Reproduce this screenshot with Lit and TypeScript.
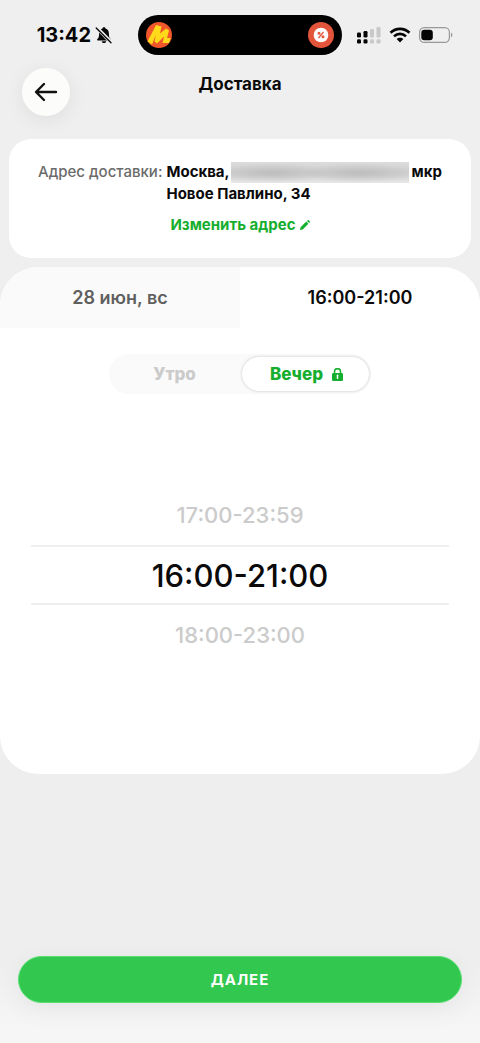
import { LitElement, html, css } from "lit";
import { customElement, property, state } from "lit/decorators.js";
import { classMap } from "lit/directives/class-map.js";

@customElement("status-bar")
class StatusBar extends LitElement {
  @property() time = "";

  static styles = css`
    :host {
      display: grid;
      grid-template-columns: 1fr 204px 1fr;
      height: 40px;
      padding-top: 15px;
      color: #050505;
    }
    .left,
    .right {
      display: flex;
      align-items: center;
    }
    .left {
      justify-content: flex-end;
      gap: 4px;
      padding-right: 25px;
      font-size: 20px;
      line-height: 24px;
      font-weight: 700;
    }
    .right {
      gap: 8px;
      padding-left: 15px;
    }
    .island {
      display: flex;
      align-items: center;
      justify-content: space-between;
      padding: 0 8px;
      border-radius: 20px;
      background: #000;
    }
    svg {
      display: block;
      flex: none;
    }
  `;

  render() {
    return html`
      <div class="left">
        <span>${this.time}</span>
        <svg width="18" height="18" viewBox="0 0 18 18" aria-hidden="true">
          <path
            d="M9 1.2c.8 0 1.4.5 1.5 1.2 2.2.7 3.4 2.6 3.4 5 0 3.6.6 4.6 1.7 5.7.6.6.3 1.3-.5 1.3H2.9c-.8 0-1.100-.7-.5-1.300 1.100-1.100 1.700-2.100 1.700-5.700 0-2.400 1.200-4.300 3.400-5C7.600 1.700 8.200 1.200 9 1.200z"
            fill="#050505"
          />
          <path d="M6.700 15.200h4.600c-.3 1.200-1.200 1.900-2.300 1.900s-2-.7-2.300-1.900z" fill="#050505" />
          <path d="M1.500 1.600 16.400 16.600" stroke="#efefef" stroke-width="3.600" />
          <path d="M1.200 2 16 16.700" stroke="#050505" stroke-width="1.300" stroke-linecap="round" />
        </svg>
      </div>
      <div class="island">
        <svg width="26" height="26" viewBox="0 0 26 26" aria-hidden="true">
          <circle cx="13" cy="13" r="13" fill="#f0562a" />
          <path
            d="M1.500 19.500 10 3 15.500 4.500 14 11.500 20 6.500 23 8.500 21 16 24.800 16 23 21 16.500 21 18 14.500 11 21.500 8.500 19.500 9.800 13 6 22.500z"
            fill="#ffd91a"
          />
        </svg>
        <svg width="26" height="26" viewBox="0 0 26 26" aria-hidden="true">
          <circle cx="13" cy="13" r="13" fill="#e2553b" />
          <circle cx="13" cy="13" r="7.300" fill="#fff" />
          <g fill="none" stroke="#e2553b" stroke-width="1.300">
            <path d="M15.500 10 10.500 16" />
            <circle cx="11" cy="11.200" r=".9" />
            <circle cx="15" cy="14.800" r=".9" />
          </g>
        </svg>
      </div>
      <div class="right">
        <svg width="24" height="17" viewBox="0 0 24 17" aria-hidden="true">
          <g fill="#050505">
            <rect x="0" y="5.500" width="4" height="5" rx="1.300" />
            <rect x="6.500" y="4" width="4" height="6.500" rx="1.300" />
            <rect x="0" y="12.300" width="4" height="4.300" rx="1.300" />
            <rect x="6.500" y="12.300" width="4" height="4.300" rx="1.300" />
          </g>
          <g fill="#c8c8c8">
            <rect x="13" y="2" width="4" height="8.500" rx="1.300" />
            <rect x="19.500" y="0" width="4" height="10.500" rx="1.300" />
            <rect x="13" y="12.300" width="4" height="4.300" rx="1.300" />
            <rect x="19.500" y="12.300" width="4" height="4.300" rx="1.300" />
          </g>
        </svg>
        <svg width="22" height="16" viewBox="0 0 22 16" aria-hidden="true">
          <g fill="none" stroke="#050505" stroke-width="2.700">
            <path d="M1.500 5.700C6.800.5 15.200.5 20.500 5.700" />
            <path d="M5 9.400c3.400-3.300 8.600-3.300 12 0" />
          </g>
          <path d="M7.600 12c1.900-1.800 4.900-1.800 6.800 0L11 15.400z" fill="#050505" />
        </svg>
        <svg width="34" height="16" viewBox="0 0 34 16" aria-hidden="true">
          <rect x=".6" y=".6" width="29.800" height="14.800" rx="4.600" fill="none" stroke="#999" stroke-width="1.200" />
          <rect x="2.300" y="2.700" width="11.500" height="10.600" rx="3" fill="#050505" />
          <path d="M32 5.500c1.800.7 1.800 4.300 0 5z" fill="#999" />
        </svg>
      </div>
    `;
  }
}

@customElement("address-card")
class AddressCard extends LitElement {
  static styles = css`
    :host {
      display: block;
      margin: 0 9px;
      padding: 22px 24px;
      border-radius: 22px;
      background: #fff;
      font-size: 15px;
      line-height: 22px;
    }
    .row {
      display: flex;
      justify-content: center;
      gap: 4px;
      margin: 0;
    }
    .label {
      color: #6b6b6b;
      font-weight: 500;
      white-space: nowrap;
    }
    .value {
      margin: 0;
      color: #0a0a0a;
      font-weight: 700;
    }
    .line {
      display: flex;
      align-items: center;
    }
    .hidden {
      width: 178px;
      height: 21px;
      margin: 0 3px 0 1px;
      background:
        radial-gradient(ellipse 56px 10px at 42px 11px, rgba(160, 160, 160, 0.4), transparent),
        radial-gradient(ellipse 56px 10px at 128px 11px, rgba(160, 160, 160, 0.4), transparent),
        linear-gradient(#dcdcdc, #d0d0d0 45%, #d3d3d3 65%, #e8e8e8);
    }
    .edit {
      display: flex;
      justify-content: center;
      margin-top: 9px;
    }
    a {
      display: flex;
      align-items: center;
      gap: 4px;
      color: #16ae2e;
      font-weight: 700;
      text-decoration: none;
    }
  `;

  render() {
    return html`
      <dl class="row">
        <dt class="label">Адрес доставки:</dt>
        <dd class="value">
          <div class="line"><span>Москва,</span><span class="hidden"></span><span>мкр</span></div>
          <div class="line">Новое Павлино, 34</div>
        </dd>
      </dl>
      <div class="edit">
        <a href="#address">
          Изменить адрес
          <svg width="10" height="10" viewBox="0 0 10 10" aria-hidden="true">
            <path
              d="M0 10 .6 7.300 6.300 1.600 8.400 3.700 2.700 9.400zM7 .9 7.700.2c.3-.3.700-.3 1 0L9.800 1.300c.3.300.3.700 0 1L9.100 3z"
              fill="#16ae2e"
            />
          </svg>
        </a>
      </div>
    `;
  }
}

@customElement("slot-picker")
class SlotPicker extends LitElement {
  @state() tab = 1;
  @state() period = 1;
  @state() slotIndex = 1;

  private tabs = ["28 июн, вс", "16:00-21:00"];
  private slots = ["17:00-23:59", "16:00-21:00", "18:00-23:00"];

  static styles = css`
    :host {
      display: block;
      overflow: hidden;
      padding-bottom: 109px;
      border-radius: 38px;
      background: #fff;
    }
    button {
      margin: 0;
      padding: 0;
      border: 0;
      background: none;
      font-family: inherit;
      cursor: pointer;
    }
    .tabs {
      display: grid;
      grid-template-columns: 1fr 1fr;
    }
    .tab {
      height: 61px;
      background: #fafafa;
      color: #5f5f5f;
      font-size: 18px;
      font-weight: 600;
    }
    .tab.active {
      background: #fff;
      color: #0a0a0a;
    }
    .periods {
      display: grid;
      grid-template-columns: 1fr 1fr;
      width: 262px;
      height: 40px;
      margin: 26px auto 91px;
      border-radius: 20px;
      background: #fafafa;
    }
    .period {
      display: flex;
      align-items: center;
      justify-content: center;
      gap: 9px;
      margin: 3px 2px;
      border-radius: 18px;
      color: #cbcbcb;
      font-size: 17px;
      font-weight: 800;
    }
    .period.active {
      padding-left: 2px;
      background: #fff;
      box-shadow: 0 0 3px rgba(0, 0, 0, 0.22);
      color: #16ae2e;
    }
    .slots {
      display: grid;
      margin: 0 31px;
    }
    .slot {
      height: 60px;
      color: #cbcbcb;
      font-size: 22px;
      font-weight: 500;
    }
    .slot.active {
      border-top: 2px solid #efefef;
      border-bottom: 2px solid #efefef;
      color: #0a0a0a;
      font-size: 31px;
    }
  `;

  render() {
    return html`
      <div class="tabs">
        ${this.tabs.map(
          (label, i) => html`<button
            class=${classMap({ tab: true, active: i === this.tab })}
            @click=${() => (this.tab = i)}
          >
            ${label}
          </button>`
        )}
      </div>
      <div class="periods">
        ${["Утро", "Вечер"].map(
          (label, i) => html`<button
            class=${classMap({ period: true, active: i === this.period })}
            @click=${() => (this.period = i)}
          >
            ${label}${i === this.period
              ? html`<svg width="11" height="13" viewBox="0 0 11 13" aria-hidden="true">
                  <path d="M2.500 6V3.700a3 3 0 0 1 6 0V6" fill="none" stroke="#16ae2e" stroke-width="1.500" />
                  <rect y="5" width="11" height="8" rx="1.200" fill="#16ae2e" />
                  <path d="M5.500 7.300v3" stroke="#fff" stroke-width="1.500" stroke-linecap="round" />
                </svg>`
              : ""}
          </button>`
        )}
      </div>
      <div class="slots">
        ${this.slots.map(
          (label, i) => html`<button
            class=${classMap({ slot: true, active: i === this.slotIndex })}
            @click=${() => (this.slotIndex = i)}
          >
            ${label}
          </button>`
        )}
      </div>
    `;
  }
}

@customElement("app-root")
class AppRoot extends LitElement {
  static styles = css`
    :host {
      display: flex;
      flex-direction: column;
      box-sizing: border-box;
      min-height: 100vh;
      background: linear-gradient(#efefef 0, #eeeeee 92%, #f6f6f6 99%);
      font-family: Inter, "Liberation Sans", sans-serif;
      color: #0a0a0a;
    }
    header {
      display: grid;
      grid-template-columns: 48px 1fr 48px;
      align-items: start;
      padding: 13px 22px 23px;
    }
    .back {
      display: grid;
      place-items: center;
      width: 48px;
      height: 48px;
      padding: 0;
      border: 0;
      border-radius: 50%;
      background: #fcfcfa;
      box-shadow: 0 4px 20px rgba(0, 0, 0, 0.07);
    }
    h1 {
      margin: 0;
      font-size: 17px;
      line-height: 32px;
      font-weight: 700;
      text-align: center;
    }
    slot-picker {
      margin-top: 9px;
    }
    footer {
      display: grid;
      margin-top: auto;
      padding: 24px 18px 40px;
    }
    .next {
      height: 47px;
      padding: 0;
      border: 1px solid #55e070;
      border-radius: 24px;
      background: #32c74f;
      box-shadow: 0 6px 24px rgba(0, 0, 0, 0.06);
      color: #fff;
      font-family: inherit;
      font-size: 15px;
      font-weight: 700;
      letter-spacing: 1px;
    }
  `;

  render() {
    return html`
      <status-bar time="13:42"></status-bar>
      <header>
        <button class="back" aria-label="Назад">
          <svg width="24" height="20" viewBox="0 0 24 20" aria-hidden="true">
            <path
              d="M10 2 2 10l8 8M2.500 10H22"
              fill="none"
              stroke="#111"
              stroke-width="2.400"
              stroke-linecap="round"
              stroke-linejoin="round"
            />
          </svg>
        </button>
        <h1>Доставка</h1>
      </header>
      <address-card></address-card>
      <slot-picker></slot-picker>
      <footer><button class="next">ДАЛЕЕ</button></footer>
    `;
  }
}
